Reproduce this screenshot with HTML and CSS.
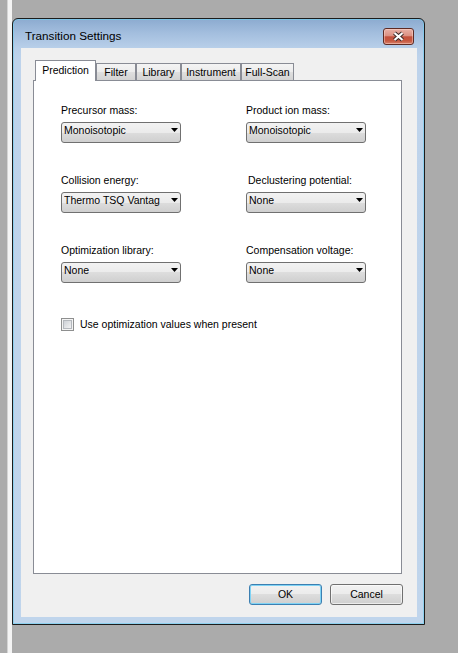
FILE: index.html
```html
<!DOCTYPE html>
<html>
<head>
<meta charset="utf-8">
<title>Transition Settings</title>
<link rel="stylesheet" href="styles.css">
</head>
<body>
<div class="desk">
  <div class="edge"></div>
  <div class="window">
    <div class="titlebar">
      <span class="title">Transition Settings</span>
      <div class="close">
        <svg width="13" height="11" viewBox="0 0 13 11">
          <path d="M2.5 2 L10.5 9 M10.5 2 L2.5 9" stroke="#3b2a2a" stroke-width="4.2" fill="none"/>
          <path d="M2.5 2 L10.5 9 M10.5 2 L2.5 9" stroke="#ffffff" stroke-width="2.2" fill="none"/>
        </svg>
      </div>
    </div>
    <div class="client">
      <div class="tabs">
        <div class="tab active">Prediction</div>
        <div class="tab w-filter">Filter</div>
        <div class="tab w-library">Library</div>
        <div class="tab w-instrument">Instrument</div>
        <div class="tab w-fullscan">Full-Scan</div>
      </div>
      <div class="panel">
        <div class="grid">
          <div class="field">
            <div class="label">Precursor mass:</div>
            <div class="combo"><span class="value">Monoisotopic</span><svg class="arrow" width="7" height="4" viewBox="0 0 7 4"><path d="M0 0 H7 L3.5 4 Z" fill="#000"/></svg></div>
          </div>
          <div class="field">
            <div class="label">Product ion mass:</div>
            <div class="combo"><span class="value">Monoisotopic</span><svg class="arrow" width="7" height="4" viewBox="0 0 7 4"><path d="M0 0 H7 L3.5 4 Z" fill="#000"/></svg></div>
          </div>
          <div class="field">
            <div class="label">Collision energy:</div>
            <div class="combo"><span class="value">Thermo TSQ Vantag</span><svg class="arrow" width="7" height="4" viewBox="0 0 7 4"><path d="M0 0 H7 L3.5 4 Z" fill="#000"/></svg></div>
          </div>
          <div class="field">
            <div class="label indent">Declustering potential:</div>
            <div class="combo"><span class="value">None</span><svg class="arrow" width="7" height="4" viewBox="0 0 7 4"><path d="M0 0 H7 L3.5 4 Z" fill="#000"/></svg></div>
          </div>
          <div class="field">
            <div class="label">Optimization library:</div>
            <div class="combo"><span class="value">None</span><svg class="arrow" width="7" height="4" viewBox="0 0 7 4"><path d="M0 0 H7 L3.5 4 Z" fill="#000"/></svg></div>
          </div>
          <div class="field">
            <div class="label">Compensation voltage:</div>
            <div class="combo"><span class="value">None</span><svg class="arrow" width="7" height="4" viewBox="0 0 7 4"><path d="M0 0 H7 L3.5 4 Z" fill="#000"/></svg></div>
          </div>
        </div>
        <div class="check">
          <span class="box"><span class="inner"></span></span>
          <span class="check-text">Use optimization values when present</span>
        </div>
      </div>
      <div class="buttons">
        <div class="btn default">OK</div>
        <div class="btn">Cancel</div>
      </div>
    </div>
  </div>
</div>
</body>
</html>
```
FILE: styles.css
```css
html, body {
  margin: 0;
  padding: 0;
}
body {
  background: #ababab;
  width: 458px;
  height: 653px;
  overflow: hidden;
  font-family: "Liberation Sans", Arial, sans-serif;
  font-size: 10.5px;
  color: #000;
}
.desk {
  display: flex;
  height: 653px;
}
.edge {
  flex: none;
  width: 4px;
  height: 653px;
  margin-left: 7px;
  border-left: 1px solid #d4d4d4;
  background: #f4f4f4;
}
.window {
  flex: none;
  margin-top: 18px;
  width: 413px;
  height: 607px;
  box-sizing: border-box;
  border: 1px solid #1c1c1c;
  border-radius: 6px 6px 0 0;
  background: linear-gradient(to bottom, #8cabd0 0px, #a3bede 14px, #b8cfe9 29px, #bed3eb 40px, #c0d5ec 100%);
  box-shadow: inset 0 0 0 1px rgba(120, 205, 240, 0.7);
  padding: 0 7px 7px 8px;
  display: flex;
  flex-direction: column;
}
.titlebar {
  height: 29px;
  box-sizing: border-box;
  padding: 9px 3px 0 4px;
  display: flex;
  justify-content: space-between;
  align-items: flex-start;
}
.title {
  margin-top: 1px;
  font-size: 11.7px;
  line-height: 14px;
  color: #000;
}
.close {
  width: 31px;
  height: 17px;
  box-sizing: border-box;
  border: 1px solid #5e2b24;
  border-radius: 3px;
  background: linear-gradient(to bottom, #e9b0a6 0%, #dc9183 45%, #c4503d 52%, #c65840 78%, #d78069 100%);
  box-shadow: inset 0 0 0 1px rgba(255, 225, 215, 0.45);
  display: flex;
  align-items: center;
  justify-content: center;
}
.close svg {
  display: block;
}
.client {
  flex: 1;
  background: #f0f0f0;
  padding: 12px 15px 12px 12px;
  display: flex;
  flex-direction: column;
}
.tabs {
  display: flex;
  align-items: flex-end;
  height: 20px;
  padding-left: 2px;
}
.tab {
  height: 17px;
  box-sizing: border-box;
  border: 1px solid #898c95;
  border-bottom: none;
  background: linear-gradient(to bottom, #f4f4f4, #ececec 50%, #dfdfdf 50%, #d3d3d3);
  line-height: 16px;
  text-align: center;
  white-space: nowrap;
}
.tab.active {
  width: 61px;
  height: 21px;
  margin-bottom: -1px;
  position: relative;
  z-index: 1;
  background: #ffffff;
  line-height: 18px;
}
.w-filter { width: 40px; }
.w-library { width: 45px; }
.w-instrument { width: 60px; }
.w-fullscan { width: 53px; }
.panel {
  height: 494px;
  box-sizing: border-box;
  background: #ffffff;
  border: 1px solid #898c95;
  padding: 23px 0 0 27px;
}
.grid {
  display: grid;
  grid-template-columns: 120px 120px;
  column-gap: 65px;
  row-gap: 31px;
}
.label {
  line-height: 13px;
  margin-bottom: 5px;
  white-space: nowrap;
}
.label.indent {
  padding-left: 2px;
}
.combo {
  height: 21px;
  box-sizing: border-box;
  border: 1px solid #707070;
  border-radius: 3px;
  background: linear-gradient(to bottom, #f2f2f2, #ebebeb 50%, #dddddd 50%, #cfcfcf);
  display: flex;
  justify-content: space-between;
  align-items: flex-start;
  padding: 0 2px 0 2px;
}
.value {
  line-height: 15px;
  white-space: nowrap;
  overflow: hidden;
}
.arrow {
  flex: none;
  margin-top: 5px;
  display: block;
}
.check {
  margin-top: 35px;
  display: flex;
  align-items: center;
  gap: 6px;
  height: 13px;
}
.box {
  width: 13px;
  height: 13px;
  box-sizing: border-box;
  border: 1px solid #8e8f8f;
  background: #f4f4f4;
  padding: 1px;
}
.inner {
  display: block;
  width: 9px;
  height: 9px;
  box-sizing: border-box;
  border: 1px solid #b4b8bd;
  background: linear-gradient(135deg, #cdd1d6, #f2f2f3);
}
.check-text {
  line-height: 13px;
  white-space: nowrap;
}
.buttons {
  display: flex;
  justify-content: flex-end;
  gap: 8px;
  margin-top: 10px;
  margin-right: -1px;
}
.btn {
  width: 73px;
  height: 21px;
  box-sizing: border-box;
  border: 1px solid #707070;
  border-radius: 3px;
  background: linear-gradient(to bottom, #f2f2f2, #ebebeb 50%, #dddddd 50%, #cfcfcf);
  box-shadow: inset 0 0 0 1px rgba(255, 255, 255, 0.6);
  text-align: center;
  line-height: 19px;
}
.btn.default {
  border-color: #3c7fb1;
  box-shadow: inset 0 0 0 1px #7fd3f5;
}
```
